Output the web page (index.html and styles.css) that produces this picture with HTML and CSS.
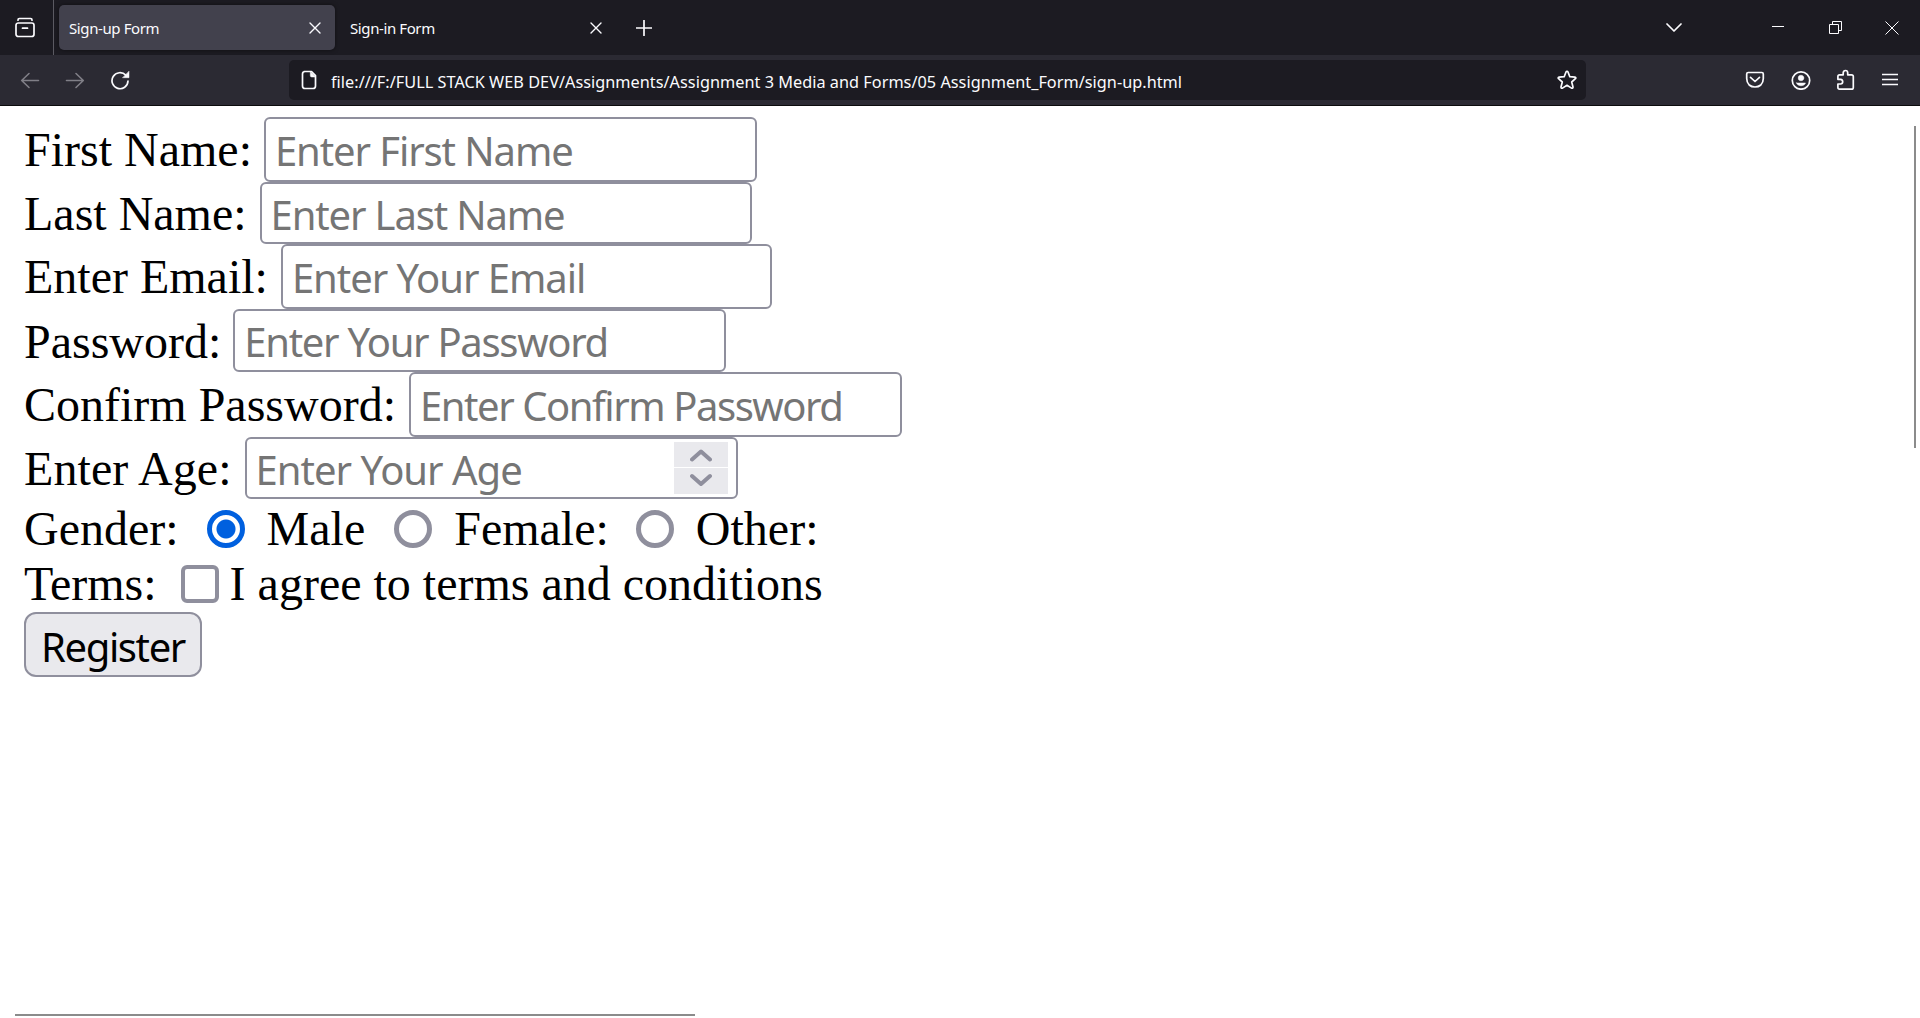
FILE: index.html
```html
<!DOCTYPE html>
<html lang="en">
<head>
<meta charset="utf-8">
<title>Sign-up Form</title>
<link rel="stylesheet" href="styles.css">
</head>
<body>
<header class="browser">
  <div class="tabbar">
    <div class="view-button">
      <svg width="22" height="22" viewBox="0 0 22 22"><path d="M4 3.2V2.9Q4 1.5 5.4 1.5H16.6Q18 1.5 18 2.9V3.2"/><rect x="2" y="6" width="18" height="13.5" rx="2.3"/><path d="M8.5 11.2H13.5"/></svg>
    </div>
    <div class="tab tab-active"><span class="tab-title">Sign-up Form</span><svg width="12" height="12" viewBox="0 0 12 12"><path d="M1 1L11 11M11 1L1 11"/></svg></div>
    <div class="tab"><span class="tab-title">Sign-in Form</span><svg width="12" height="12" viewBox="0 0 12 12"><path d="M1 1L11 11M11 1L1 11"/></svg></div>
    <svg class="new-tab" width="16" height="16" viewBox="0 0 16 16"><path d="M8 .5V15.5M.5 8H15.5"/></svg>
    <div class="window-controls">
      <svg class="all-tabs" width="16" height="16" viewBox="0 0 16 16"><path d="M1 4L8 11L15 4"/></svg>
      <svg class="minimize thin" width="12" height="13" viewBox="0 0 12 13"><path d="M0 5.5H12"/></svg>
      <svg class="restore thin" width="13" height="13" viewBox="0 0 13 13"><path d="M.5 3.5H9.5V12.5H.5ZM3.5 3.5V.5H12.5V9.5H9.5"/></svg>
      <svg class="thin" width="14" height="14" viewBox="0 0 14 14"><path d="M.5 .5L13.5 13.5M13.5 .5L.5 13.5"/></svg>
    </div>
  </div>
  <div class="toolbar">
    <svg class="dim" width="20" height="20" viewBox="0 0 20 20"><path d="M18.5 10.500H2M9 3.500L1.700 10.500L9 17.500"/></svg>
    <svg class="dim" width="20" height="20" viewBox="0 0 20 20"><path d="M1.500 10.500H18M11 3.500L18.300 10.500L11 17.500"/></svg>
    <svg class="reload" width="20" height="20" viewBox="0 0 20 20"><path d="M18 11A8 8 0 1 1 15.800 5.200"/><path class="solid" d="M19 1.500V7.700H12.800Z"/></svg>
    <div class="urlbar">
      <svg width="16" height="20" viewBox="0 0 16 20"><path d="M3 1.500H10.500L14.500 5.700V16Q14.500 18.500 12 18.500H4Q1.500 18.500 1.500 16V4Q1.500 1.500 4 1.500"/><path class="solid" d="M9.300 1.500V5.500Q9.300 7 10.800 7H14.500Z"/></svg>
      <span class="url">file:///F:/FULL STACK WEB DEV/Assignments/Assignment 3 Media and Forms/05 Assignment_Form/sign-up.html</span>
      <svg width="20" height="20" viewBox="0 0 20 20"><path d="M10 1.300Q10.700 1.300 11 2L12.800 6.700L17.900 7.100Q19.500 7.400 18.400 8.700L14.700 12L16 17Q16.100 18.700 14.500 18.100L10 15.300L5.500 18.100Q3.900 18.700 4 17L5.300 12L1.600 8.700Q.5 7.400 2.100 7.100L7.200 6.700L9 2Q9.300 1.300 10 1.300Z"/></svg>
    </div>
    <div class="actions">
      <svg width="20" height="20" viewBox="0 0 20 20"><path d="M3.200 2.500H16.800Q18.300 2.500 18.300 4V8.500Q18.300 12.500 15.800 15Q13.500 17 10 17Q6.500 17 4.200 15Q1.700 12.500 1.700 8.500V4Q1.700 2.500 3.200 2.500Z"/><path d="M5.500 7.300L10 11.500L14.500 7.300"/></svg>
      <svg width="20" height="20" viewBox="0 0 20 20"><circle cx="10" cy="10.500" r="8.700"/><circle class="solid" cx="10" cy="8" r="2.800"/><path class="solid" d="M5.500 13H14.500Q13.500 15.800 10 15.800Q6.500 15.800 5.500 13Z"/></svg>
      <svg width="20" height="22" viewBox="0 0 20 22"><path d="M3.500 5.800H7.200V3.800Q7.400 1.500 9.500 1.500Q11.600 1.500 11.700 3.800V5.800H15.500Q17.300 5.800 17.300 7.500V18.500Q17.300 20.200 15.500 20.200H3.500Q1.900 20.200 1.900 18.500V15H4.500Q6.700 14.800 6.700 12.700Q6.700 10.600 4.500 10.300H1.900V7.500Q1.900 5.800 3.500 5.800Z"/></svg>
      <svg width="16" height="14" viewBox="0 0 16 14"><path d="M.5 1.500H15.500M.5 6.500H15.500M.5 11.500H15.500"/></svg>
    </div>
  </div>
</header>
<main class="page">
  <form class="form">
    <div class="row"><label for="first">First Name:</label><input class="field f-first" id="first" placeholder="Enter First Name"></div>
    <div class="row row-last"><label for="last">Last Name:</label><input class="field f-last" id="last" placeholder="Enter Last Name"></div>
    <div class="row row-email"><label for="email">Enter Email:</label><input class="field f-email" id="email" placeholder="Enter Your Email"></div>
    <div class="row row-mid"><label for="pass">Password:</label><input class="field f-pass" id="pass" placeholder="Enter Your Password"></div>
    <div class="row row-confirm"><label for="confirm">Confirm Password:</label><input class="field f-confirm" id="confirm" placeholder="Enter Confirm Password"></div>
    <div class="row row-age"><label for="age">Enter Age:</label>
      <div class="number"><input class="number-input" id="age" placeholder="Enter Your Age">
        <div class="spinner">
          <span class="spin"><svg width="22" height="14" viewBox="0 0 22 14"><path d="M2 11.500L11 3.500L20 11.500"/></svg></span>
          <span class="spin spin-down"><svg width="22" height="14" viewBox="0 0 22 14"><path d="M2 3L11 11L20 3"/></svg></span>
        </div>
      </div>
    </div>
    <div class="row row-choice"><span>Gender:</span><input class="radio" type="radio" name="gender" id="male" checked><label for="male">Male</label><input class="radio radio-female" type="radio" name="gender" id="female"><label for="female">Female:</label><input class="radio radio-other" type="radio" name="gender" id="other"><label for="other">Other:</label></div>
    <div class="row row-terms"><span>Terms:</span><input class="check" type="checkbox" id="terms"><label for="terms">I agree to terms and conditions</label></div>
    <button class="register" type="button">Register</button>
  </form>
  <div class="scroll-v"></div>
  <div class="scroll-h"></div>
</main>
</body>
</html>
```

FILE: styles.css
```css
* { box-sizing: border-box; }
body { margin: 0; width: 1920px; height: 1018px; overflow: hidden; display: flex; flex-direction: column; background: #fff; }
svg { display: block; flex: none; fill: none; stroke: #fbfbfe; stroke-width: 1.7; stroke-linecap: round; stroke-linejoin: round; }
.solid { fill: #fbfbfe; stroke-width: .5; }
.thin { stroke-width: 1; stroke-linecap: butt; stroke-linejoin: miter; }

.browser { flex: none; height: 106px; border-bottom: 1px solid #0c0c0d; background: #2b2a33; color: #fbfbfe; font-family: "Noto Sans", "Open Sans", sans-serif; }
.tabbar { display: flex; align-items: center; height: 55px; background: #1c1b22; }
.view-button { display: flex; align-items: center; width: 54px; height: 55px; padding-left: 14px; border-right: 1px solid #5b5a62; }
.tab { display: flex; align-items: center; justify-content: space-between; width: 276px; height: 45px; margin-left: 5px; padding: 0 14px 0 10px; border-radius: 5px; font-size: 15px; }
.tab svg { stroke-width: 1.4; }
.tab-active { background: #42414d; box-shadow: 0 0 4px rgba(0, 0, 0, .5); }
.tab-title { padding-top: 1px; letter-spacing: -.4px; white-space: nowrap; }
.new-tab { margin-left: 20px; }
.window-controls { display: flex; align-items: center; margin-left: auto; padding-right: 21px; }
.all-tabs { margin-right: 90px; }
.minimize { margin-right: 45px; }
.restore { margin-right: 43px; }

.toolbar { display: flex; align-items: center; height: 50px; padding: 0 22px 0 20px; }
.dim { margin-right: 25px; stroke: #807f87; stroke-width: 1.6; }
.urlbar { display: flex; align-items: center; width: 1297px; height: 40px; margin-left: 159px; padding: 0 9px 0 12px; border-radius: 5px; background: #1c1b22; }
.url { flex: 1; margin-left: 14px; padding-top: 3px; font-size: 16.250px; letter-spacing: .03px; white-space: nowrap; }
.actions { display: flex; flex: 1; align-items: center; justify-content: space-between; margin-left: 159px; }

.page { position: relative; flex: 1; }
.form { padding: 11px 0 0 24px; font: 48px/56px "Liberation Serif", "Times New Roman", serif; color: #000; }
.row { display: flex; align-items: center; gap: 12px; height: 65px; white-space: nowrap; }
.row-last { height: 62px; gap: 13px; }
.row-last label, .row-age label, .row-mid label { padding-top: 2px; }
.row-email { gap: 13px; }
.row-mid { height: 63px; }
.row-confirm { gap: 13px; }
.row-age { height: 62px; gap: 13px; }
.row-age label { letter-spacing: .1px; }
.field, .number { width: 493px; height: 100%; border: 2px solid #8f8f9d; border-radius: 6px; background: #fff; }
.field, .number-input, .register { font-family: "Noto Sans", "Open Sans", sans-serif; font-size: 40px; line-height: 56px; }
.field { padding: 2px 9px 0; }
.f-first { letter-spacing: -1.1px; }
.f-last { width: 492px; letter-spacing: -1.150px; }
.f-email { width: 491px; letter-spacing: -1.050px; }
.f-pass { letter-spacing: -1.300px; }
.f-confirm { letter-spacing: -1.450px; }
.field::placeholder, .number-input::placeholder { color: #757575; opacity: 1; }
.number { display: flex; align-items: center; padding: 0 8px 0 9px; }
.number-input { flex: 1; min-width: 0; height: 100%; padding: 2px 0 0; border: 0; outline: 0; background: none; letter-spacing: -1px; }
.spinner { display: grid; grid-template-rows: 25px 26px; gap: 1px; width: 54px; }
.spin { display: grid; place-items: center; background: #e9e9ed; }
.spin svg { stroke: #8f8f9d; stroke-width: 4; }
.spin-down { padding-bottom: 2px; }

.row-choice { height: 56px; padding-top: 3px; }
.row-terms { height: 57px; padding-top: 1px; }
.radio, .check { flex: none; appearance: none; width: 38px; height: 38px; border: 5px solid #8f8f9d; background: #fff; }
.radio { margin: 0 10px 0 16px; border-radius: 50%; }
.radio-female { margin-left: 17px; }
.radio-other { margin-left: 15px; }
.radio:checked { border-color: #0060df; background: radial-gradient(circle, #0060df 9px, #fff 10px); }
.check { margin: 0 -1px 0 12px; border-width: 4px; border-radius: 6px; }
.register { display: block; width: 178px; height: 65px; padding: 5px 0 0; border: 2px solid #8f8f9d; border-radius: 12px; background: #e9e9ed; color: #000; letter-spacing: -1.400px; }

.scroll-v { position: absolute; top: 20px; right: 4px; width: 2px; height: 322px; background: #8b8b8b; }
.scroll-h { position: absolute; left: 15px; bottom: 2px; width: 680px; height: 2px; background: #8b8b8b; }
```
